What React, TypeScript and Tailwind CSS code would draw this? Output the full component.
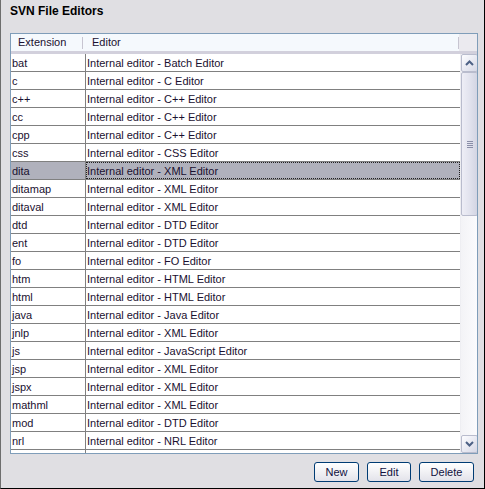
import React from 'react';

const rows: [string, string][] = [
  ['bat', 'Batch Editor'],
  ['c', 'C Editor'],
  ['c++', 'C++ Editor'],
  ['cc', 'C++ Editor'],
  ['cpp', 'C++ Editor'],
  ['css', 'CSS Editor'],
  ['dita', 'XML Editor'],
  ['ditamap', 'XML Editor'],
  ['ditaval', 'XML Editor'],
  ['dtd', 'DTD Editor'],
  ['ent', 'DTD Editor'],
  ['fo', 'FO Editor'],
  ['htm', 'HTML Editor'],
  ['html', 'HTML Editor'],
  ['java', 'Java Editor'],
  ['jnlp', 'XML Editor'],
  ['js', 'JavaScript Editor'],
  ['jsp', 'XML Editor'],
  ['jspx', 'XML Editor'],
  ['mathml', 'XML Editor'],
  ['mod', 'DTD Editor'],
  ['nrl', 'NRL Editor'],
  ['nvdl', 'NVDL Editor'],
  ['php', 'PHP Editor'],
];

function Arrow({ up }: { up?: boolean }) {
  return (
    <svg width="9" height="6" viewBox="0 0 9 6">
      <polyline
        points={up ? '1,5 4.5,1.5 8,5' : '1,1 4.5,4.5 8,1'}
        fill="none"
        stroke="#4d6185"
        strokeWidth="2"
      />
    </svg>
  );
}

function ScrollButton({ up }: { up?: boolean }) {
  return (
    <div className="h-[18px] w-[17px] flex items-center justify-center border border-[#b9bccd] rounded-[2px] bg-gradient-to-br from-[#fdfdff] to-[#d6d8e6]">
      <Arrow up={up} />
    </div>
  );
}

export default function App() {
  const selected = 6;
  return (
    <div
      className="w-[485px] h-[489px] bg-[#e0dfe3] border-l border-l-[#6e6e6e] border-r border-b border-black flex flex-col text-[#1a1030]"
      style={{ fontFamily: '"Liberation Sans", Arial, sans-serif' }}
    >
      {/* Title */}
      <div className="h-[33px] pl-[9px] pt-[4px] text-[12px] font-bold text-black leading-[15px]">SVN File Editors</div>

      {/* Table */}
      <div className="ml-[9px] w-[468px] h-[421px] border border-[#7f9db9] bg-white flex flex-col">
        {/* Header */}
        <div className="h-[20px] flex text-[11px] bg-[#f5f9fd] border-b-[3px] border-b-[#d2d0dc]">
          <div className="w-[72px] pl-[7px] flex items-center relative">
            Extension
            <span className="absolute right-0 top-[3px] h-[12px] w-px bg-[#c7c5d1]" />
          </div>
          <div className="w-[376px] pl-[9px] flex items-center relative">
            Editor
            <span className="absolute right-0 top-[3px] h-[12px] w-px bg-[#c7c5d1]" />
          </div>
          <div className="flex-1 bg-[#ebeaef]" />
        </div>

        {/* Body */}
        <div className="flex-1 flex overflow-hidden">
          <div className="w-[449px] overflow-hidden text-[11px]">
            {rows.map(([ext, ed], i) => (
              <div
                key={ext}
                className={`h-[18px] flex border-b border-[#808080] ${i === selected ? 'bg-[#b0b1bc]' : 'bg-white'}`}
              >
                <div className="w-[75px] pl-[1px] pt-[1px] leading-[16px] border-r border-[#808080]">{ext}</div>
                <div
                  className={`flex-1 pt-[1px] leading-[14px] border border-dotted ${i === selected ? 'border-[#202020]' : 'border-transparent'}`}
                >
                  Internal editor - {ed}
                </div>
              </div>
            ))}
          </div>

          {/* Scrollbar */}
          <div className="w-[17px] flex flex-col bg-[#f4f4f7] border-l border-[#eeeef2]">
            <ScrollButton up />
            <div className="h-[144px] w-[17px] border border-[#b9bccd] rounded-[2px] bg-gradient-to-r from-[#eeeef6] via-[#e2e3ee] to-[#d3d5e3] flex flex-col items-center justify-center gap-[1px]">
              <span className="block w-[6px] h-px bg-[#8a8ea8]" />
              <span className="block w-[6px] h-px bg-[#8a8ea8]" />
              <span className="block w-[6px] h-px bg-[#8a8ea8]" />
              <span className="block w-[6px] h-px bg-[#8a8ea8]" />
            </div>
            <div className="flex-1 bg-gradient-to-r from-[#f3f3f6] to-[#fbfbfd]" />
            <ScrollButton />
          </div>
        </div>
      </div>

      {/* Buttons */}
      <div className="flex justify-end gap-[8px] pr-[10px] pt-[8px] text-[11px] text-[#101040]">
        <button className="w-[45px] h-[20px] border border-[#003c74] rounded-[3px] bg-gradient-to-b from-white to-[#e3e3ea]">New</button>
        <button className="w-[44px] h-[20px] border border-[#003c74] rounded-[3px] bg-gradient-to-b from-white to-[#e3e3ea]">Edit</button>
        <button className="w-[55px] h-[20px] border border-[#003c74] rounded-[3px] bg-gradient-to-b from-white to-[#e3e3ea]">Delete</button>
      </div>
    </div>
  );
}
